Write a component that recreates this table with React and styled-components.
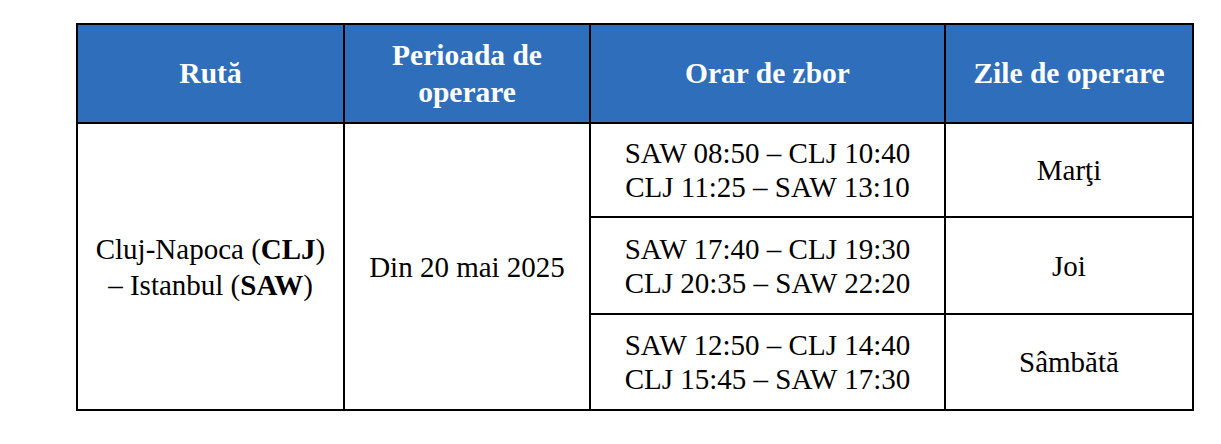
import React from 'react';
import styled, { createGlobalStyle } from 'styled-components';

const GlobalStyle = createGlobalStyle`
    html, body {
        margin: 0;
        padding: 0;
        background: #ffffff;
    }
`;

const Page = styled.div`
    padding: 23px 0 0 76px;
    font-family: "Liberation Serif", "Times New Roman", serif;
`;

const Table = styled.table`
    border-collapse: collapse;
    table-layout: fixed;
    width: 1116px;
    border: 2px solid #000;
    color: #000;
`;

const HeadRow = styled.tr`
    height: 99px;
    background: #2f6eba;
`;

const BodyRow = styled.tr`
    height: ${(p) => p.h}px;
`;

const HeadCell = styled.th`
    border: 2px solid #000;
    color: #ffffff;
    font-weight: bold;
    font-size: 29.5px;
    line-height: 37px;
    text-align: center;
    vertical-align: middle;
    padding: 0 6px;
`;

const Cell = styled.td`
    border: 2px solid #000;
    font-size: 29px;
    line-height: ${(p) => p.lh || 34}px;
    text-align: center;
    vertical-align: middle;
    padding: 0 6px;
`;

const flights = [
    { lines: ['SAW 08:50 – CLJ 10:40', 'CLJ 11:25 – SAW 13:10'], day: 'Marţi', h: 94 },
    { lines: ['SAW 17:40 – CLJ 19:30', 'CLJ 20:35 – SAW 22:20'], day: 'Joi', h: 97 },
    { lines: ['SAW 12:50 – CLJ 14:40', 'CLJ 15:45 – SAW 17:30'], day: 'Sâmbătă', h: 96 },
];

export default function App() {
    return (
        <>
            <GlobalStyle />
            <Page>
                <Table>
                    <colgroup>
                        <col style={{ width: 267 }} />
                        <col style={{ width: 246 }} />
                        <col style={{ width: 355 }} />
                        <col style={{ width: 248 }} />
                    </colgroup>
                    <thead>
                        <HeadRow>
                            <HeadCell>Rută</HeadCell>
                            <HeadCell>
                                Perioada de
                                <br />
                                operare
                            </HeadCell>
                            <HeadCell>Orar de zbor</HeadCell>
                            <HeadCell>Zile de operare</HeadCell>
                        </HeadRow>
                    </thead>
                    <tbody>
                        {flights.map((f, i) => (
                            <BodyRow key={f.day} h={f.h}>
                                {i === 0 && (
                                    <>
                                        <Cell rowSpan={3} lh={36}>
                                            Cluj-Napoca (<b>CLJ</b>)
                                            <br />– Istanbul (<b>SAW</b>)
                                        </Cell>
                                        <Cell rowSpan={3}>Din 20 mai 2025</Cell>
                                    </>
                                )}
                                <Cell>
                                    {f.lines[0]}
                                    <br />
                                    {f.lines[1]}
                                </Cell>
                                <Cell>{f.day}</Cell>
                            </BodyRow>
                        ))}
                    </tbody>
                </Table>
            </Page>
        </>
    );
}
